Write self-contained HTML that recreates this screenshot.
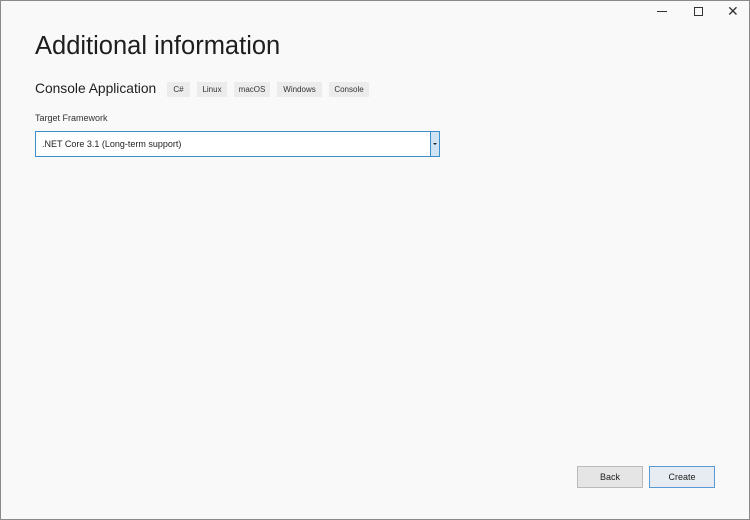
<!DOCTYPE html><html><head><style>
*{margin:0;padding:0;box-sizing:border-box}
body{width:750px;height:520px;background:#f9f9f9;font-family:"Liberation Sans",sans-serif;position:relative;overflow:hidden;color:#1e1e1e}
.a{position:absolute}
h1{position:absolute;left:35px;top:32px;font-weight:normal;font-size:25.5px;color:#1e1e1e}
.t{position:absolute;top:82px;height:15px;background:#ececec;font-size:8px;line-height:15px;text-align:center;color:#333}
.btn{position:absolute;top:466px;width:66px;height:22px;font-size:9px;line-height:20px;text-align:center;border:1px solid #bbb;background:#e5e5e5}
</style></head><body>
<div class="a" style="left:0;top:0;width:750px;height:520px;border:1px solid #8a8a8a"></div>
<div class="a" style="left:657px;top:11px;width:10px;height:1px;background:#333"></div>
<div class="a" style="left:694px;top:7px;width:9px;height:9px;border:1px solid #333"></div>
<div class="a" style="left:727px;top:3px;font-size:14px;color:#333">✕</div>
<h1>Additional information</h1>
<div class="a" style="left:35px;top:81px;font-size:13.8px">Console Application</div>
<div class="t" style="left:167px;width:23px">C#</div>
<div class="t" style="left:197px;width:30px">Linux</div>
<div class="t" style="left:234px;width:36px">macOS</div>
<div class="t" style="left:277px;width:45px">Windows</div>
<div class="t" style="left:329px;width:40px">Console</div>
<div class="a" style="left:35px;top:113px;font-size:9px;color:#333">Target Framework</div>
<div class="a" style="left:35px;top:131px;width:405px;height:26px;border:1px solid #3c8ec8;background:#fff;font-size:9px;line-height:24px;padding-left:6px">.NET Core 3.1 (Long-term support)
<div class="a" style="right:0;top:0;width:9px;height:24px;background:#cfe3f5;border-left:1px solid #3c8ec8"><div class="a" style="left:2px;top:11px;border:2px solid transparent;border-top:2px solid #222"></div></div></div>
<div class="btn" style="left:577px">Back</div>
<div class="btn" style="left:649px;border-color:#5a9bd5;background:#e7ecf2">Create</div>
</body></html>
